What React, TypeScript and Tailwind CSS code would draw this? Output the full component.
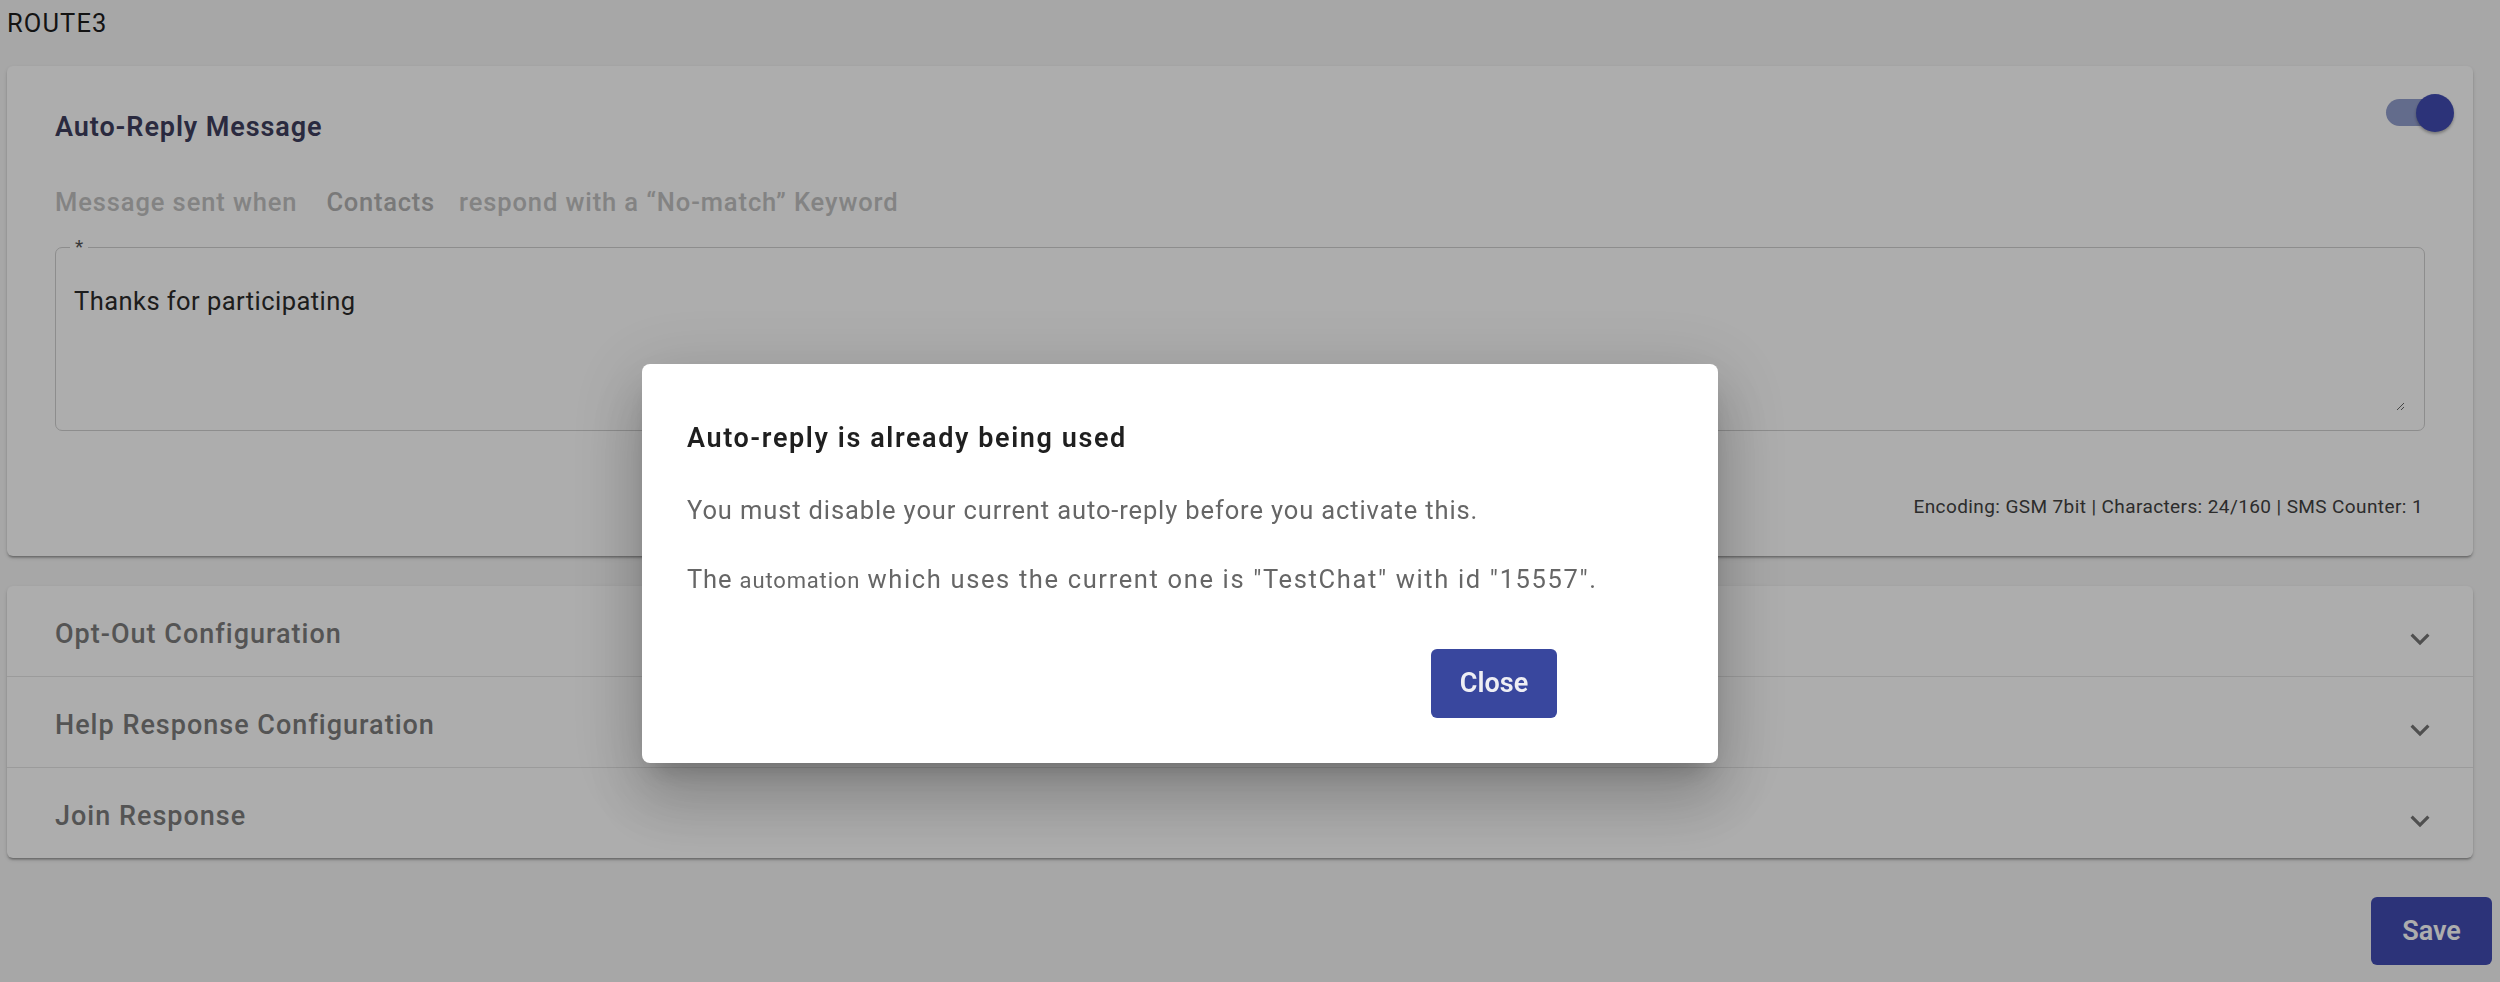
import React from "react";

const cardShadow =
  "shadow-[0_3px_2px_-2px_rgba(0,0,0,0.2),0_2px_2px_0_rgba(0,0,0,0.14),0_2px_5px_0_rgba(0,0,0,0.12)]";

const ExpandMore = () => (
  <svg viewBox="0 0 24 24" className="mt-[16px] h-[38px] w-[38px] fill-[#757575]">
    <path d="M16.59 8.59 12 13.17 7.41 8.59 6 10l6 6 6-6z" />
  </svg>
);

const Switch = () => (
  <div className="relative -mr-[29px] h-[38px] w-[68px] shrink-0">
    <span className="absolute left-0 top-[5px] h-[27px] w-[59px] rounded-full bg-[#939fce]" />
    <span className="absolute right-0 top-0 h-[38px] w-[38px] rounded-full bg-[#414cb3] shadow-[0_2px_3px_rgba(0,0,0,0.3)]" />
  </div>
);

const sections = ["Opt-Out Configuration", "Help Response Configuration", "Join Response"];

export default function App() {
  return (
    <div className="relative min-h-screen bg-[#f7f7f7] pl-[7px] pr-[8px] font-['Roboto',sans-serif]">
      <div className="pt-[9px] text-[25.5px] leading-[29px] tracking-[1.1px] text-[#1c1c1c]">ROUTE3</div>

      {/* auto-reply card */}
      <section className={`mt-[28px] mr-[19px] rounded-[6px] bg-white px-[48px] pt-[28px] pb-[38px] ${cardShadow}`}>
        <div className="flex items-start justify-between">
          <h2 className="mt-[17px] text-[27px] font-semibold leading-[32px] tracking-[0.9px] text-[#3e3e5e]">
            Auto-Reply Message
          </h2>
          <Switch />
        </div>
        <div className="mt-[44px] flex items-baseline text-[25.5px] font-medium leading-[30px] tracking-[0.9px]">
          <span className="text-[#c2c2c2]">Message sent when</span>
          <span className="ml-[29px] tracking-[0.75px] text-[#b3b3b3]">Contacts</span>
          <span className="ml-[24px] text-[#c2c2c2]">respond with a “No-match” Keyword</span>
        </div>
        <div className="relative mt-[30px] rounded-[7px] border-[1.5px] border-[#d0d0d0] pl-[18px] pr-[19px] pt-[38px] pb-[19px]">
          <span className="absolute -top-[12px] left-[14px] bg-white px-[5px] text-[19px] leading-[22px] text-[#555]">*</span>
          <textarea
            readOnly
            defaultValue="Thanks for participating"
            className="block h-[125px] w-full bg-transparent text-[25.5px] leading-[30px] tracking-[0.45px] text-[#2c2c2c] outline-none"
          />
        </div>
        <p className="mt-[65px] pr-[2px] text-right text-[19px] leading-[22px] tracking-[0.4px] text-[#424242]">
          Encoding: GSM 7bit | Characters: 24/160 | SMS Counter: 1
        </p>
      </section>

      {/* collapsed sections */}
      <section className={`mt-[30px] mr-[19px] rounded-[6px] bg-white ${cardShadow}`}>
        {sections.map((title, i) => (
          <div
            key={title}
            className={`flex h-[90px] items-center justify-between pl-[48px] pr-[34px] ${i > 0 ? "box-content border-t border-black/10" : ""}`}
          >
            <span className="mt-[7px] text-[27px] font-medium tracking-[1px] text-[#7d7d7d]">{title}</span>
            <ExpandMore />
          </div>
        ))}
      </section>

      <div className="mt-[39px] flex justify-end">
        <button className="h-[68px] w-[121px] rounded-[6px] bg-[#414cb3] text-[27px] font-semibold text-white">Save</button>
      </div>

      {/* dialog */}
      <div className="fixed inset-0 bg-black/[0.32]">
        <div
          role="dialog"
          className="absolute left-[642px] top-[364px] w-[1076px] rounded-[8px] bg-white pl-[45px] pr-[161px] pt-[58px] pb-[45px] shadow-[0_17px_24px_-11px_rgba(0,0,0,0.2),0_38px_61px_5px_rgba(0,0,0,0.14),0_14px_73px_13px_rgba(0,0,0,0.12)]"
        >
          <h2 className="text-[27px] font-semibold leading-[32px] tracking-[1.6px] text-[#1f1f1f]">
            Auto-reply is already being used
          </h2>
          <p className="mt-[41px] whitespace-nowrap text-[25.5px] leading-[30px] tracking-[0.88px] text-[#666]">
            You must disable your current auto-reply before you activate this.
          </p>
          <p className="mt-[39px] whitespace-nowrap text-[25.5px] leading-[30px] tracking-[0.86px] text-[#666]">
            The <span className="text-[22px]">automation</span>{" "}
            <span className="tracking-[1.64px]">which uses the current one is "TestChat" with id "15557".</span>
          </p>
          <div className="mt-[53px] flex justify-end">
            <button className="h-[69px] w-[126px] rounded-[6px] bg-[#39479e] text-[27px] font-semibold text-[#eeeef4]">
              Close
            </button>
          </div>
        </div>
      </div>
    </div>
  );
}
